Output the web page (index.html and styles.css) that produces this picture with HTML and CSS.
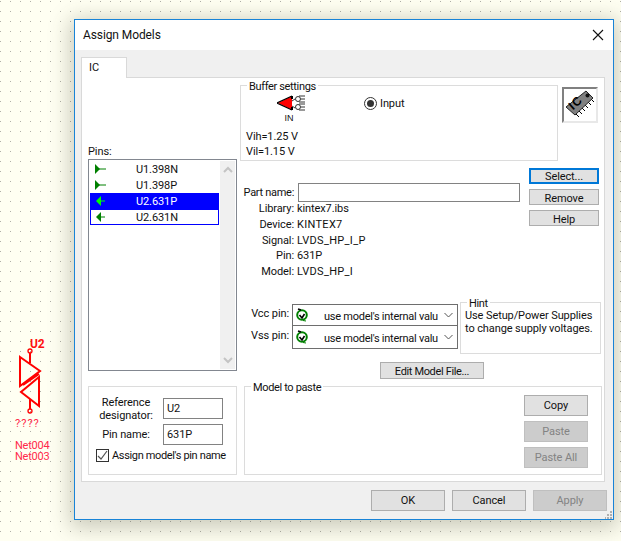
FILE: index.html
```html
<!DOCTYPE html>
<html lang="en">
<head>
<meta charset="utf-8">
<title>Assign Models</title>
<link rel="stylesheet" href="styles.css">
</head>
<body>
<div class="schematic">
  <span class="sch-ref">U2</span>
  <svg class="sch-symbol" width="40" height="75" viewBox="0 0 40 75" fill="none" stroke="#ff0000" stroke-width="2">
    <circle cx="20" cy="6" r="2" stroke-width="1.3"/>
    <path d="M20 8V18M10 12 30 26 10 41ZM29 32 11 47 29 61ZM13 40 29 29M20 54V64"/>
    <circle cx="20" cy="66" r="2" stroke-width="1.3"/>
  </svg>
  <span class="sch-value">????</span>
  <span class="sch-net sch-net-a">Net004</span>
  <span class="sch-net sch-net-b">Net003</span>
</div>

<div class="dialog">
  <div class="titlebar">
    <span>Assign Models</span>
    <svg class="close" width="12" height="12" viewBox="0 0 12 12" stroke="#111" stroke-width="1.1"><path d="M1 1 11 11M11 1 1 11"/></svg>
  </div>
  <div class="tabs"><div class="tab">IC</div></div>
  <div class="panel">
    <div class="left">
      <div class="pins-label">Pins:</div>
      <div class="listbox">
        <div class="rows">
          <div class="row">
            <svg class="pin" width="14" height="10" viewBox="0 0 14 10"><path d="M1 0 6 5 1 10Z" fill="#008000"/><path d="M5 5H12" stroke="#008000"/></svg>
            <span>U1.398N</span>
          </div>
          <div class="row">
            <svg class="pin" width="14" height="10" viewBox="0 0 14 10"><path d="M1 0 6 5 1 10Z" fill="#008000"/><path d="M5 5H12" stroke="#008000"/></svg>
            <span>U1.398P</span>
          </div>
          <div class="row selected">
            <svg class="pin" width="14" height="10" viewBox="0 0 14 10"><path d="M2 5 7 0V10Z" fill="#00ff00"/><path d="M6 5H11" stroke="#00ff00"/></svg>
            <span>U2.631P</span>
          </div>
          <div class="row focused">
            <svg class="pin" width="14" height="10" viewBox="0 0 14 10"><path d="M2 5 7 0V10Z" fill="#008000"/><path d="M6 5H11" stroke="#008000"/></svg>
            <span>U2.631N</span>
          </div>
        </div>
        <div class="scrollbar">
          <svg width="10" height="7" viewBox="0 0 10 7" fill="none" stroke="#c4c4c4" stroke-width="2"><path d="M1 6 5 2 9 6"/></svg>
          <svg width="10" height="7" viewBox="0 0 10 7" fill="none" stroke="#c4c4c4" stroke-width="2"><path d="M1 1 5 5 9 1"/></svg>
        </div>
      </div>
      <div class="group ref-group">
        <div class="ref-grid">
          <div class="ref-label">Reference<br>designator:</div>
          <div class="field">U2</div>
          <div class="ref-label">Pin name:</div>
          <div class="field">631P</div>
        </div>
        <div class="check-row">
          <span class="checkbox"><svg width="11" height="11" viewBox="0 0 11 11" fill="none" stroke="#555" stroke-width="1.2"><path d="M1 6 4 9 10 1"/></svg></span>
          <span class="tight">Assign model's pin name</span>
        </div>
      </div>
    </div>

    <div class="right">
      <div class="top-row">
        <div class="group buffer">
          <span class="legend">Buffer settings</span>
          <div class="buffer-left">
            <svg class="buffer-icon" width="30" height="16" viewBox="0 0 30 16">
              <path d="M1 8 15 1V15Z" fill="#ff0000"/>
              <path d="M0 8 15 1M0 8 15 15" stroke="#000" stroke-width="1.2" fill="none"/>
              <path d="M15 1V4M15 12V15" stroke="#000" stroke-width="2"/>
              <g fill="#fff" stroke="#000" stroke-width=".8">
                <path d="M15 6 18 4M15 11 18 13M22 1H28M22 7H28M22 9H28M22 15H28" fill="none"/>
                <circle cx="21" cy="4" r="2.500"/>
                <circle cx="21" cy="12" r="2.500"/>
              </g>
              <path d="M24 4H28M24 12H28" stroke="#000" stroke-width=".8"/>
            </svg>
            <div class="in-label">IN</div>
            <div class="voltage">Vih=1.25 V</div>
            <div class="voltage">Vil=1.15 V</div>
          </div>
          <div class="radio-row">
            <span class="radio"><span class="radio-dot"></span></span>
            <span>Input</span>
          </div>
        </div>
        <div class="ic-badge">
          <svg width="32" height="32" viewBox="0 0 32 32">
            <path d="M12 25 16 29M15 22 19 26M18 19 22 23M21 16 25 20M24 13 28 17M27 10 31 14" stroke="#000"/>
            <path d="M3 19 23 3 30 10 12 27Z" fill="#808080" stroke="#222"/>
            <text x="0" y="0" class="ic-text" transform="translate(10 22.500) rotate(-42)">IC</text>
            <circle cx="24.500" cy="7.500" r="2" fill="#111"/>
          </svg>
        </div>
      </div>

      <div class="part-section">
        <div class="part-info">
          <div class="part-name">
            <label>Part name:</label>
            <div class="field part-field"></div>
          </div>
          <dl class="info">
            <dt>Library:</dt><dd>kintex7.ibs</dd>
            <dt>Device:</dt><dd class="wide">KINTEX7</dd>
            <dt>Signal:</dt><dd class="wide">LVDS_HP_I_P</dd>
            <dt>Pin:</dt><dd>631P</dd>
            <dt>Model:</dt><dd class="wide">LVDS_HP_I</dd>
          </dl>
        </div>
        <div class="side-buttons">
          <button class="btn btn-small btn-default">Select...</button>
          <button class="btn btn-small">Remove</button>
          <button class="btn btn-small">Help</button>
        </div>
      </div>

      <div class="power-row">
        <div class="power-grid">
          <div class="power-label">Vcc pin:</div>
          <div class="combo">
            <svg width="14" height="14" viewBox="0 0 14 14" fill="none"><circle cx="7" cy="7" r="4.800" stroke="#008000" stroke-width="2"/><path d="M3 1 6 2M4.500 7 7 10 9.500 6" stroke="#000" stroke-width="1.600"/><path d="M8 12.500 11 13" stroke="#008000"/></svg>
            <span class="combo-text">use model's internal value</span>
            <svg class="chevron" width="9" height="6" viewBox="0 0 9 6" fill="none" stroke="#555"><path d="M.5 1 4.500 5 8.500 1"/></svg>
          </div>
          <div class="power-label">Vss pin:</div>
          <div class="combo combo-second">
            <svg width="14" height="14" viewBox="0 0 14 14" fill="none"><circle cx="7" cy="7" r="4.800" stroke="#008000" stroke-width="2"/><path d="M3 1 6 2M4.500 7 7 10 9.500 6" stroke="#000" stroke-width="1.600"/><path d="M8 12.500 11 13" stroke="#008000"/></svg>
            <span class="combo-text">use model's internal value</span>
            <svg class="chevron" width="9" height="6" viewBox="0 0 9 6" fill="none" stroke="#555"><path d="M.5 1 4.500 5 8.500 1"/></svg>
          </div>
        </div>
        <div class="group hint">
          <span class="legend hint-legend">Hint</span>
          Use Setup/Power Supplies<br>to change supply voltages.
        </div>
      </div>

      <button class="btn edit-btn tight">Edit Model File...</button>

      <div class="group paste-group">
        <span class="legend">Model to paste</span>
        <div class="paste-buttons">
          <button class="btn btn-tall">Copy</button>
          <button class="btn btn-tall btn-disabled">Paste</button>
          <button class="btn btn-tall btn-disabled">Paste All</button>
        </div>
      </div>
    </div>
  </div>
  <div class="footer">
    <button class="btn btn-foot">OK</button>
    <button class="btn btn-foot">Cancel</button>
    <button class="btn btn-foot btn-disabled">Apply</button>
  </div>
  <svg class="grip" width="8" height="8" viewBox="0 0 8 8" fill="#b0b0b0"><path d="M5 0h2v2H5zM2 3h2v2H2zM5 3h2v2H5zM-1 6h2v2H-1zM2 6h2v2H2zM5 6h2v2H5z"/></svg>
</div>
</body>
</html>
```

FILE: styles.css
```css
* { box-sizing: border-box; }
html, body { margin: 0; height: 100%; }
body {
  position: relative;
  width: 621px;
  height: 541px;
  overflow: hidden;
  background-color: #fffff2;
  background-image: radial-gradient(circle at 0.5px 0.5px, #b0b0a8 0.6px, transparent 0.6px);
  background-size: 10px 10px;
  background-position: 0 1px;
  font-family: Roboto, "Liberation Sans", sans-serif;
  font-size: 11px;
  letter-spacing: -0.1px;
  line-height: 15px;
  color: #111;
  white-space: nowrap;
}
button { font: inherit; letter-spacing: inherit; color: inherit; padding: 0; margin: 0; }
.tight { letter-spacing: -0.35px; }
.wide { letter-spacing: 0.3px; }

/* schematic canvas */
.schematic { position: absolute; inset: 0; color: #ff2a4a; }
.sch-symbol { position: absolute; left: 10px; top: 345px; }
.sch-ref { position: absolute; left: 30px; top: 337px; color: #ff1010; font-weight: 700; font-size: 12px; }
.sch-value { position: absolute; left: 15px; top: 416px; letter-spacing: 1px; }
.sch-net { position: absolute; left: 15px; line-height: 11px; letter-spacing: -0.25px; }
.sch-net-a { top: 440px; }
.sch-net-b { top: 451px; }

/* dialog */
.dialog {
  position: absolute;
  left: 74px;
  top: 19px;
  width: 540px;
  height: 501px;
  background: #f0f0f0;
  border: 1px solid #1883d7;
  box-shadow: 0 4px 20px 4px rgba(70, 70, 50, .28);
  display: flex;
  flex-direction: column;
}
.titlebar {
  height: 30px;
  background: #fff;
  display: flex;
  align-items: center;
  justify-content: space-between;
  padding: 0 9px 0 8px;
  font-size: 12px;
}
.tabs { height: 27px; padding: 7px 0 0 6px; flex: none; }
.tab {
  width: 46px;
  height: 21px;
  background: #fff;
  border: 1px solid #d9d9d9;
  border-bottom: 0;
  padding: 2px 0 0 7px;
  position: relative;
  z-index: 1;
}
.panel {
  margin-left: 6px;
  width: 524px;
  height: 405px;
  background: #fff;
  border: 1px solid #d9d9d9;
  display: flex;
  flex: none;
}

/* left column */
.left { width: 155px; padding: 66px 0 0 6px; flex: none; }
.pins-label { height: 15px; }
.listbox {
  width: 149px;
  height: 212px;
  border: 1px solid #828790;
  display: flex;
  padding: 1px;
}
.rows { width: 129px; flex: none; }
.row {
  height: 16px;
  width: 129px;
  display: flex;
  align-items: center;
  padding-left: 4px;
}
.row span { margin-left: 28px; }
.pin { flex: none; }
.row.selected { background: #0000ff; color: #fff; }
.row.focused { border: 1px solid #0000ff; padding-left: 3px; }
.scrollbar {
  flex: 1;
  margin-left: 1px;
  background: #f0f0f0;
  display: flex;
  flex-direction: column;
  justify-content: space-between;
  align-items: center;
  padding: 5px 0;
}
.group { position: relative; border: 1px solid #dcdcdc; background: #fff; }
.legend {
  position: absolute;
  left: 6px;
  top: -7px;
  padding: 0 2px;
  background: #fff;
  letter-spacing: -0.35px;
}
.hint-legend { top: -6px; }
.ref-group { width: 149px; height: 89px; margin-top: 15px; padding-top: 11px; }
.ref-grid {
  display: grid;
  grid-template-columns: 74px 60px;
  grid-template-rows: 21px 21px;
  row-gap: 5px;
  align-items: center;
  text-align: center;
  line-height: 13px;
}
.field {
  border: 1px solid #828282;
  background: #fff;
  height: 21px;
  padding-left: 3px;
  line-height: 19px;
  text-align: left;
}
.check-row { display: flex; align-items: center; gap: 3px; margin-top: 3px; padding-left: 7px; height: 15px; }
.checkbox {
  width: 13px;
  height: 13px;
  border: 1px solid #333;
  display: flex;
  align-items: center;
  justify-content: center;
  flex: none;
}

/* right column */
.right { width: 364px; padding: 7px 0 0 3px; flex: none; }
.top-row { display: flex; gap: 4px; height: 76px; }
.buffer { width: 318px; height: 76px; display: flex; padding: 9px 0 0 5px; }
.buffer-left { width: 118px; flex: none; }
.buffer-icon { display: block; margin-left: 31px; }
.in-label {
  width: 86px;
  text-align: center;
  font: 9px/10px "Liberation Sans", sans-serif;
  margin: 2px 0 6px;
}
.radio-row { display: flex; gap: 3px; align-items: center; height: 15px; margin-top: 1px; }
.radio {
  width: 13px;
  height: 13px;
  border-radius: 50%;
  border: 1px solid #333;
  display: flex;
  align-items: center;
  justify-content: center;
}
.radio-dot { width: 7px; height: 7px; border-radius: 50%; background: #333; }
.ic-badge {
  width: 36px;
  height: 36px;
  margin-top: 2px;
  border: 2px solid;
  border-color: #808080 #e8e8e8 #e8e8e8 #808080;
  background: #fff;
}
.ic-badge svg { display: block; margin: -1px; }
.ic-text { font: 700 12px "Liberation Sans", sans-serif; fill: #000; letter-spacing: 1px; }

.part-section { display: flex; }
.part-info { width: 280px; padding-top: 22px; flex: none; }
.part-name { display: flex; gap: 4px; align-items: center; }
.part-name label { width: 54px; text-align: right; flex: none; letter-spacing: -0.3px; }
.part-field { width: 222px; height: 19px; }
.info {
  margin: -1px 0 0;
  display: grid;
  grid-template-columns: 54px 1fr;
  column-gap: 3px;
  grid-auto-rows: 15.750px;
}
.info dt { text-align: right; }
.info dd { margin: 0; }
.side-buttons { margin: 7px 0 0 9px; display: flex; flex-direction: column; gap: 5px; }

.btn {
  display: block;
  background: #e1e1e1;
  border: 1px solid #adadad;
  text-align: center;
  cursor: default;
}
.btn-small { width: 70px; height: 16px; line-height: 15px; padding-top: 1px; }
.btn-default { border: 2px solid #0078d7; line-height: 13px; padding-top: 0; }
.btn-disabled { background: #cccccc; border-color: #bfbfbf; color: #838383; }

.power-row { display: flex; margin-top: 22px; height: 52px; }
.power-grid {
  display: grid;
  grid-template-columns: 49px 166px;
  grid-template-rows: 22px 23px;
  column-gap: 3px;
  padding-top: 2px;
  align-content: start;
}
.power-label { text-align: right; padding-top: 2px; }
.combo {
  height: 23px;
  border: 1px solid #6e6e6e;
  display: flex;
  align-items: center;
  padding-left: 2px;
  background: #fff;
}
.combo-second { margin-top: -1px; height: 24px; }
.combo-text { width: 114px; margin-left: 15px; overflow: hidden; flex: none; padding-top: 3px; letter-spacing: -0.25px; }
.chevron { margin-left: 6px; flex: none; }
.hint { width: 141px; height: 52px; margin-left: 2px; padding: 6px 0 0 4px; line-height: 13px; }

.edit-btn { width: 104px; height: 17px; margin: 8px 0 0 140px; line-height: 15px; padding-top: 1px; }

.paste-group { width: 358px; height: 89px; margin: 7px 0 0 4px; padding: 8px 13px 0 0; }
.paste-buttons { display: flex; flex-direction: column; gap: 5px; align-items: flex-end; }
.btn-tall { width: 64px; height: 21px; padding-top: 1px; }

.footer { display: flex; justify-content: flex-end; gap: 7px; padding: 8px 6px 0 0; flex: 1; }
.btn-foot { width: 74px; height: 21px; }
.grip { position: absolute; right: 0; bottom: 0; }
```
